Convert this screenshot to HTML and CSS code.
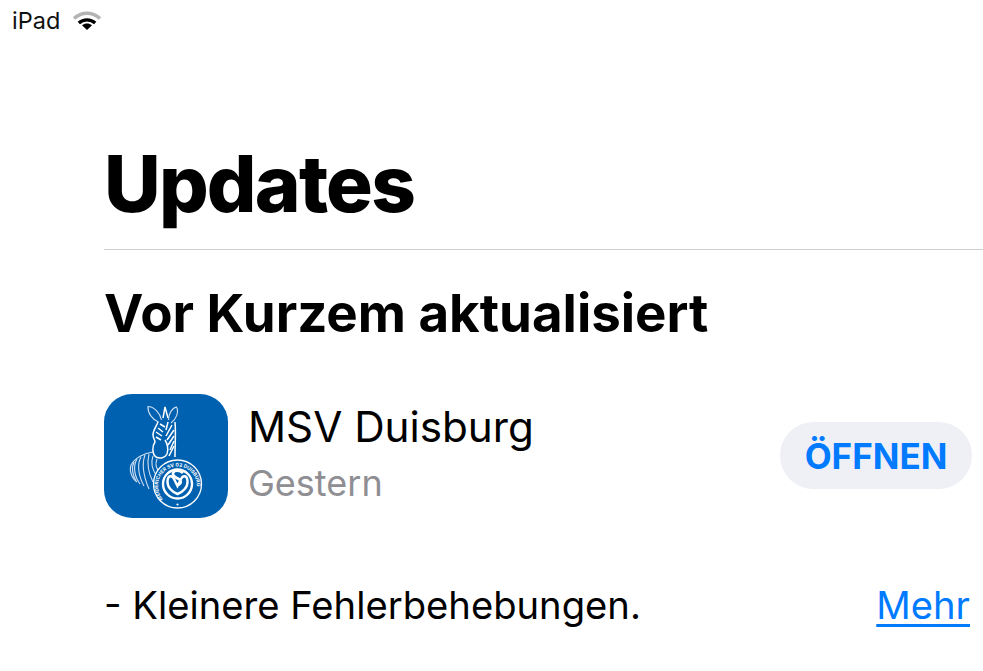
FILE: index.html
```html
<!doctype html>
<html lang="de">
    <head>
        <title>Updates</title>
        <link rel="stylesheet" href="styles.css">
    </head>
    <body>
        <div class="status-bar">
            <span>iPad</span>
            <svg class="wifi" width="30" height="20" viewBox="0 0 30 20">
                <path d="M2 8.5C9.5 1.5 20.5 1.5 28 8.5" fill="none" stroke="#b4b4b4" stroke-width="3.6"/>
                <path d="M6.8 13C11.5 8.8 18.5 8.8 23.2 13" fill="none" stroke="#000" stroke-width="3.4"/>
                <path d="M10 15.2C13 12.8 17 12.8 20 15.2L15 20Z" fill="#000"/>
            </svg>
        </div>

        <main class="content">
            <h1>Updates</h1>
            <div class="section">
                <h2>Vor Kurzem aktualisiert</h2>
                <div class="app-row">
                    <svg class="app-icon" width="124" height="124" viewBox="0 0 124 124">
                        <rect width="124" height="124" rx="28" fill="#0061b1"/>
                        <g fill="none" stroke="#cfe0f2" stroke-width="1.1">
                            <!-- ears -->
                            <path d="M54.5 28C48 25 43.5 19 44 12.5C50 12.5 56 19 57.5 26"/>
                            <path d="M64.5 26C64.5 20 68 14 72.5 13C75 18 72.5 25 67 29"/>
                            <!-- mane -->
                            <path d="M49 58C40 59 31 64 27 71C25 77 28 85 33 88"/>
                            <path d="M33 65C29 72 30 82 36 90M37 63C33 70 34 81 40 92M41 61C38 69 39 81 45 95M45 60C43 68 44 78 49 88M49 62C47 68 48 75 52 81M30 68C27 74 29 82 32 87M53 65C51 70 52 74 55 77"/>
                        </g>
                        <g fill="none" stroke="#fff" stroke-width="1.5">
                            <!-- tuft and face outline -->
                            <path d="M59 24L61 13L64 24"/>
                            <path d="M54 28C52 33 49 36 49 41C49 44 51 46 51 48C48 52 48 60 52 63C56 65 61 64 63 60C65 55 63 49 61 46"/>
                            <path d="M71 28C72 38 71 50 71 63"/>
                            <!-- stripes -->
                            <path d="M56 30L61 33M54 34L59 38M52 38L58 42M52 43L57 46"/>
                            <path d="M64 28L62 36M68 31L62 42M70 36L63 46M70 42L64 51M70 47L66 56M70 52L65 62"/>
                        </g>
                        <!-- badge -->
                        <circle cx="73.5" cy="90" r="24" fill="#0061b1" stroke="#fff" stroke-width="1.3"/>
                        <path id="badge-ring" d="M59 105A19.5 19.5 0 1 1 88 105" fill="none"/>
                        <text class="badge-text">
                            <textPath href="#badge-ring">MEIDERICHER SV 02 DUISBURG</textPath>
                        </text>
                        <circle cx="73.5" cy="90" r="14.5" fill="none" stroke="#fff" stroke-width="2.4"/>
                        <path d="M63.5 87C64 81 68 81 70 85L73.5 92L77 85C79 81 83 81 83.5 87C84 93 79 98 73.5 100C68 98 63 93 63.5 87Z" fill="none" stroke="#fff" stroke-width="2.4"/>
                        <path d="M79 79C76 76 70 76 69 79C68 83 74 84 76 86C78 88 76 91 73 91" fill="none" stroke="#fff" stroke-width="2.6"/>
                        <circle cx="73.5" cy="110.5" r="1.1" fill="#fff"/>
                    </svg>
                    <div class="app-info">
                        <div class="app-name">MSV Duisburg</div>
                        <div class="app-date">Gestern</div>
                    </div>
                    <button class="open-btn">ÖFFNEN</button>
                </div>
                <div class="notes">
                    <span>- Kleinere Fehlerbehebungen.</span>
                    <a class="more" href="#">Mehr</a>
                </div>
            </div>
        </main>
    </body>
</html>
```

FILE: styles.css
```css
html,
body {
    margin: 0;
    height: 671px;
    overflow: hidden;
    background: #fff;
    color: #000;
    font-family: Inter, "Liberation Sans", sans-serif;
}
.status-bar {
    display: flex;
    align-items: center;
    gap: 12px;
    height: 40px;
    padding-left: 12px;
    font-size: 23.5px;
    color: #111;
}
.wifi {
    margin-top: -1px;
}
.content {
    padding-left: 104px;
}
h1 {
    margin: 99px 0 0;
    height: 110px;
    line-height: 90px;
    font-size: 78px;
    font-weight: 800;
    letter-spacing: -1.8px;
}
.section {
    border-top: 1px solid #cfcfd1;
}
h2 {
    margin: 0;
    padding-top: 35px;
    line-height: 56px;
    font-size: 52.8px;
    font-weight: 700;
}
.app-row {
    display: flex;
    align-items: center;
    margin-top: 53px;
    padding-right: 11px;
}
.app-icon {
    flex: none;
}
.badge-text {
    font-size: 4.9px;
    font-weight: 700;
    fill: #fff;
}
.app-info {
    flex: 1;
    margin-left: 20px;
    margin-top: -2px;
}
.app-name {
    font-size: 42.2px;
    line-height: 56px;
}
.app-date {
    font-size: 36px;
    line-height: 56px;
    color: #8e8e93;
}
.open-btn {
    width: 192px;
    height: 67px;
    margin-bottom: 1px;
    padding: 0;
    border: none;
    border-radius: 34px;
    background: #eff0f6;
    color: #007aff;
    font-family: inherit;
    font-size: 35px;
    font-weight: 700;
}
.notes {
    display: flex;
    justify-content: space-between;
    align-items: center;
    margin-top: 56px;
    padding-right: 13px;
    font-size: 38.2px;
    line-height: 62px;
}
.more {
    color: #007aff;
    text-underline-offset: 5px;
}
```
